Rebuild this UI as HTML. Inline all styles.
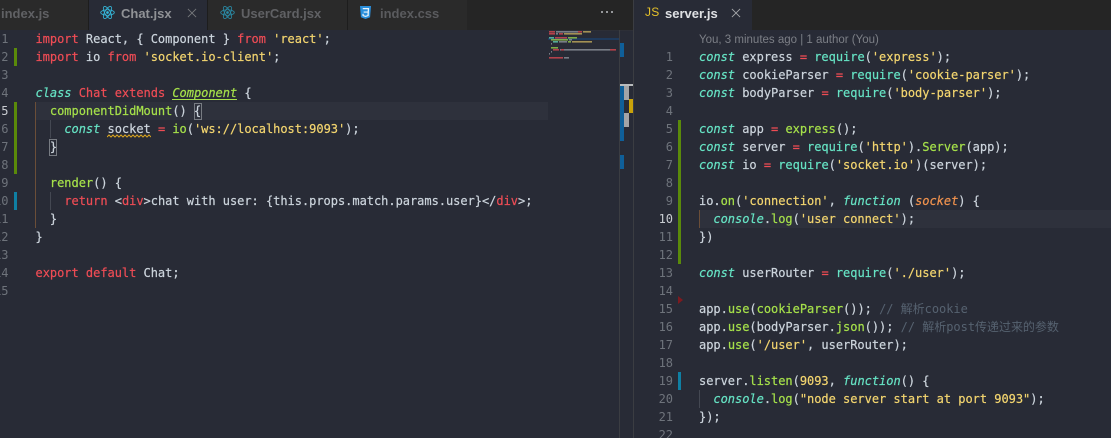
<!DOCTYPE html>
<html><head><meta charset="utf-8">
<style>
html,body{margin:0;padding:0;background:#282b36;}
#a{position:relative;width:1111px;height:438px;overflow:hidden;background:#282b36;font-family:"DejaVu Sans Mono","Noto Sans CJK SC",monospace;font-size:12px;color:#ccd4dc;}
.l{position:absolute;height:18px;line-height:18px;white-space:pre;letter-spacing:-.024px;-webkit-text-stroke:.2px;}
.n{position:absolute;height:18px;line-height:18px;text-align:right;color:#6e737b;width:30px;letter-spacing:-.024px;}
.b{position:absolute;}
.r{color:#ee4c55}.g{color:#a5e04a}.c{color:#66e3c4;font-style:italic}.q{color:#66e3c4}.y{color:#f3d56f}.o{color:#f0924e;font-style:italic}.m{color:#566270;-webkit-text-stroke:0}
.t{position:absolute;top:0;height:30px;line-height:27px;font-family:"Liberation Sans",sans-serif;font-size:13px;font-weight:bold;color:#606164;white-space:pre;}
.mm g rect{height:1.6px}
</style></head><body><div id="a">

<!-- tab bars -->
<div class="b" style="left:0;top:0;width:1111px;height:30px;background:#252525"></div>
<div class="b" style="left:0;top:0;width:88px;height:30px;background:#2a2a2a"></div>
<div class="b" style="left:88px;top:0;width:120px;height:30px;background:#282b36;border-left:1px solid #1d1d1d;border-right:1px solid #1d1d1d;box-sizing:border-box"></div>
<div class="b" style="left:208px;top:0;width:140px;height:30px;background:#2a2a2a;border-right:1px solid #1d1d1d;box-sizing:border-box"></div>
<div class="b" style="left:348px;top:0;width:119px;height:30px;background:#2a2a2a"></div>
<div class="b" style="left:634px;top:0;width:118px;height:30px;background:#282b36"></div>
<div class="b" style="left:633px;top:0;width:1px;height:438px;background:#3b3d42"></div>

<div class="t" style="left:1px">index.js</div>
<svg class="b" style="left:100px;top:5px" width="15" height="15" viewBox="-11 -11 22 22" fill="none" stroke="#35b9dc" stroke-width="1.2"><ellipse rx="10" ry="4"/><ellipse rx="10" ry="4" transform="rotate(60)"/><ellipse rx="10" ry="4" transform="rotate(120)"/><circle r="2" fill="#35b9dc" stroke="none"/></svg>
<div class="t" style="left:121px;color:#909296">Chat.jsx</div>
<svg class="b" style="left:187px;top:8px" width="10" height="10" viewBox="0 0 11 11" stroke="#75777b" stroke-width="1"><path d="M1 1L10 10M10 1L1 10"/></svg>
<svg class="b" style="left:220px;top:5px" width="15" height="15" viewBox="-11 -11 22 22" fill="none" stroke="#2a8ba6" stroke-width="1.2"><ellipse rx="10" ry="4"/><ellipse rx="10" ry="4" transform="rotate(60)"/><ellipse rx="10" ry="4" transform="rotate(120)"/><circle r="2" fill="#2a8ba6" stroke="none"/></svg>
<div class="t" style="left:241px">UserCard.jsx</div>
<svg class="b" style="left:360px;top:6px" width="11" height="13" viewBox="0 0 12 15" preserveAspectRatio="none"><path d="M0 0H12L11 13L6 15L1 13Z" fill="#2a8fdc"/><path d="M3 3H9.2L8.8 11L6 12L3.4 11L3.3 9M4 7H8.8" fill="none" stroke="#e8f3fb" stroke-width="1.4"/></svg>
<div class="t" style="left:380px;color:#5a5b5e">index.css</div>
<div class="b" style="left:601px;top:11px;width:2px;height:2px;background:#96989b;box-shadow:5px 0 #96989b,10px 0 #96989b"></div>
<div class="t" style="left:645px;top:0;color:#e6c229;font-size:12px;font-weight:normal;letter-spacing:.3px;line-height:25px">JS</div>
<div class="t" style="left:665px;color:#dfe1e4">server.js</div>
<svg class="b" style="left:731px;top:8px" width="10" height="10" viewBox="0 0 11 11" stroke="#a4a6a9" stroke-width="1"><path d="M1 1L10 10M10 1L1 10"/></svg>

<!-- active lines -->
<div class="b" style="left:36px;top:102px;width:512px;height:18px;background:#2e313c"></div>
<div class="b" style="left:699px;top:210px;width:412px;height:18px;background:#2e313c"></div>

<!-- git gutters left -->
<div class="b" style="left:14px;top:48px;width:3px;height:18px;background:#5a8a0a"></div>
<div class="b" style="left:14px;top:102px;width:3px;height:72px;background:#5a8a0a"></div>
<div class="b" style="left:14px;top:192px;width:3px;height:18px;background:#0f7fa3"></div>
<!-- guides left -->
<div class="b" style="left:35px;top:102px;width:1px;height:126px;background:#6b4e38"></div>
<div class="b" style="left:50px;top:120px;width:1px;height:18px;background:#444852"></div>
<div class="b" style="left:50px;top:192px;width:1px;height:18px;background:#444852"></div>
<!-- bracket boxes -->
<div class="b" style="left:194px;top:103px;width:6px;height:15px;border:1px solid #777b82"></div>
<div class="b" style="left:49px;top:139px;width:6px;height:15px;border:1px solid #777b82"></div>
<!-- component underline -->
<div class="b" style="left:172px;top:99px;width:65px;height:1px;background:#a5e04a"></div>
<!-- squiggle -->
<svg class="b" style="left:107px;top:134px" width="44" height="4" viewBox="0 0 44 4" fill="none" stroke="#d9a520" stroke-width="1"><path d="M0 3L2 1L4 3L6 1L8 3L10 1L12 3L14 1L16 3L18 1L20 3L22 1L24 3L26 1L28 3L30 1L32 3L34 1L36 3L38 1L40 3L42 1L44 3"/></svg>

<!-- left numbers -->
<div class="n" style="left:-21.5px;top:30px">1</div>
<div class="n" style="left:-21.5px;top:48px">2</div>
<div class="n" style="left:-21.5px;top:66px">3</div>
<div class="n" style="left:-21.5px;top:84px">4</div>
<div class="n" style="left:-21.5px;top:102px;color:#c9ccd1">5</div>
<div class="n" style="left:-21.5px;top:120px">6</div>
<div class="n" style="left:-21.5px;top:138px">7</div>
<div class="n" style="left:-21.5px;top:156px">8</div>
<div class="n" style="left:-21.5px;top:174px">9</div>
<div class="n" style="left:-21.5px;top:192px">10</div>
<div class="n" style="left:-21.5px;top:210px">11</div>
<div class="n" style="left:-21.5px;top:228px">12</div>
<div class="n" style="left:-21.5px;top:246px">13</div>
<div class="n" style="left:-21.5px;top:264px">14</div>
<div class="n" style="left:-21.5px;top:282px">15</div>

<!-- left code -->
<div class="l" style="left:35.5px;top:30px"><span class="r">import</span> React, { Component } <span class="r">from</span> <span class="y">'react'</span>;</div>
<div class="l" style="left:35.5px;top:48px"><span class="r">import</span> io <span class="r">from</span> <span class="y">'socket.io-client'</span>;</div>
<div class="l" style="left:35.5px;top:84px"><span class="c">class</span> <span class="r">Chat</span> <span class="r">extends</span> <span class="g" style="font-style:italic">Component</span> {</div>
<div class="l" style="left:35.5px;top:102px">  <span class="g">componentDidMount</span>() {</div>
<div class="l" style="left:35.5px;top:120px">    <span class="c">const</span> socket <span class="r">=</span> <span class="g">io</span>(<span class="y">'ws://localhost:9093'</span>);</div>
<div class="l" style="left:35.5px;top:138px">  }</div>
<div class="l" style="left:35.5px;top:174px">  <span class="g">render</span>() {</div>
<div class="l" style="left:35.5px;top:192px">    <span class="r">return</span> &lt;<span class="r">div</span>&gt;chat with user: {this.props.match.params.user}&lt;/<span class="r">div</span>&gt;;</div>
<div class="l" style="left:35.5px;top:210px">  }</div>
<div class="l" style="left:35.5px;top:228px">}</div>
<div class="l" style="left:35.5px;top:264px"><span class="r">export</span> <span class="r">default</span> Chat;</div>

<!-- minimap -->
<svg class="b mm" style="left:548px;top:30px" width="71" height="32" viewBox="0 0 71 32">
<rect x="0" y="8" width="71" height="2" fill="#1f3a5c"/>
<g opacity=".7">
<rect x="1" y="1" width="6" height="1" fill="#ee4c55"/><rect x="8" y="1" width="22" height="1" fill="#9aa0a8"/><rect x="30" y="1" width="4" height="1" fill="#ee4c55"/><rect x="35" y="1" width="8" height="1" fill="#d8bd62"/>
<rect x="1" y="3" width="6" height="1" fill="#ee4c55"/><rect x="8" y="3" width="2" height="1" fill="#9aa0a8"/><rect x="11" y="3" width="4" height="1" fill="#ee4c55"/><rect x="16" y="3" width="18" height="1" fill="#d8bd62"/>
<rect x="1" y="7" width="5" height="1" fill="#66e3c4"/><rect x="7" y="7" width="12" height="1" fill="#ee4c55"/><rect x="20" y="7" width="9" height="1" fill="#a5e04a"/>
<rect x="3" y="9" width="17" height="1" fill="#a5e04a"/><rect x="21" y="9" width="3" height="1" fill="#9aa0a8"/>
<rect x="5" y="11" width="5" height="1" fill="#66e3c4"/><rect x="11" y="11" width="8" height="1" fill="#9aa0a8"/><rect x="20" y="11" width="3" height="1" fill="#a5e04a"/><rect x="24" y="11" width="20" height="1" fill="#d8bd62"/>
<rect x="3" y="13" width="1" height="1" fill="#9aa0a8"/>
<rect x="3" y="17" width="7" height="1" fill="#a5e04a"/>
<rect x="5" y="19" width="6" height="1" fill="#ee4c55"/><rect x="12" y="19" width="1" height="1" fill="#9aa0a8"/><rect x="13" y="19" width="3" height="1" fill="#ee4c55"/><rect x="16" y="19" width="46" height="1" fill="#9aa0a8"/><rect x="62" y="19" width="6" height="1" fill="#ee4c55"/>
<rect x="3" y="21" width="1" height="1" fill="#9aa0a8"/>
<rect x="1" y="23" width="1" height="1" fill="#9aa0a8"/>
<rect x="1" y="27" width="14" height="1" fill="#ee4c55"/><rect x="16" y="27" width="5" height="1" fill="#9aa0a8"/>
</g>
</svg>

<!-- overview ruler -->
<div class="b" style="left:548px;top:30px;width:85px;height:1px;background:#2d2f37"></div>
<div class="b" style="left:619px;top:30px;width:1px;height:408px;background:#3b3d42"></div>
<div class="b" style="left:620px;top:43px;width:4px;height:14px;background:#0f5f99"></div>
<div class="b" style="left:620px;top:84px;width:13px;height:2px;background:#b9bbbd"></div>
<div class="b" style="left:620px;top:86px;width:4px;height:55px;background:#0f5f99"></div>
<div class="b" style="left:624px;top:86px;width:5px;height:14px;background:#a3a4a6"></div>
<div class="b" style="left:624px;top:113px;width:5px;height:14px;background:#a3a4a6"></div>
<div class="b" style="left:629px;top:99px;width:4px;height:14px;background:#c9a20a"></div>
<div class="b" style="left:620px;top:155px;width:4px;height:14px;background:#0f5f99"></div>

<!-- right gutters -->
<div class="b" style="left:678px;top:120px;width:3px;height:144px;background:#5a8a0a"></div>
<div class="b" style="left:678px;top:372px;width:3px;height:18px;background:#0f7fa3"></div>
<svg class="b" style="left:678px;top:296px" width="5" height="8" viewBox="0 0 5 8"><path d="M0 0L5 4L0 8Z" fill="#7d1a1f"/></svg>
<div class="b" style="left:699px;top:210px;width:1px;height:18px;background:#6b4e38"></div>
<div class="b" style="left:699px;top:390px;width:1px;height:18px;background:#444852"></div>

<div class="b" style="left:699px;top:32px;height:16px;line-height:16px;font-family:'Liberation Sans',sans-serif;font-size:11.5px;color:#7c7f86;white-space:pre">You, 3 minutes ago | 1 author (You)</div>

<!-- right numbers -->
<div class="n" style="left:643px;top:48px">1</div>
<div class="n" style="left:643px;top:66px">2</div>
<div class="n" style="left:643px;top:84px">3</div>
<div class="n" style="left:643px;top:102px">4</div>
<div class="n" style="left:643px;top:120px">5</div>
<div class="n" style="left:643px;top:138px">6</div>
<div class="n" style="left:643px;top:156px">7</div>
<div class="n" style="left:643px;top:174px">8</div>
<div class="n" style="left:643px;top:192px">9</div>
<div class="n" style="left:643px;top:210px;color:#c9ccd1">10</div>
<div class="n" style="left:643px;top:228px">11</div>
<div class="n" style="left:643px;top:246px">12</div>
<div class="n" style="left:643px;top:264px">13</div>
<div class="n" style="left:643px;top:282px">14</div>
<div class="n" style="left:643px;top:300px">15</div>
<div class="n" style="left:643px;top:318px">16</div>
<div class="n" style="left:643px;top:336px">17</div>
<div class="n" style="left:643px;top:354px">18</div>
<div class="n" style="left:643px;top:372px">19</div>
<div class="n" style="left:643px;top:390px">20</div>
<div class="n" style="left:643px;top:408px">21</div>
<div class="n" style="left:643px;top:426px">22</div>

<!-- right code -->
<div class="l" style="left:699px;top:48px"><span class="c">const</span> express <span class="r">=</span> <span class="q">require</span>(<span class="y">'express'</span>);</div>
<div class="l" style="left:699px;top:66px"><span class="c">const</span> cookieParser <span class="r">=</span> <span class="q">require</span>(<span class="y">'cookie-parser'</span>);</div>
<div class="l" style="left:699px;top:84px"><span class="c">const</span> bodyParser <span class="r">=</span> <span class="q">require</span>(<span class="y">'body-parser'</span>);</div>
<div class="l" style="left:699px;top:120px"><span class="c">const</span> app <span class="r">=</span> <span class="g">express</span>();</div>
<div class="l" style="left:699px;top:138px"><span class="c">const</span> server <span class="r">=</span> <span class="q">require</span>(<span class="y">'http'</span>).<span class="g">Server</span>(app);</div>
<div class="l" style="left:699px;top:156px"><span class="c">const</span> io <span class="r">=</span> <span class="q">require</span>(<span class="y">'socket.io'</span>)(server);</div>
<div class="l" style="left:699px;top:192px">io.<span class="g">on</span>(<span class="y">'connection'</span>, <span class="c">function</span> (<span class="o">socket</span>) {</div>
<div class="l" style="left:699px;top:210px">  <span class="c">console</span>.<span class="g">log</span>(<span class="y">'user connect'</span>);</div>
<div class="l" style="left:699px;top:228px">})</div>
<div class="l" style="left:699px;top:264px"><span class="c">const</span> userRouter <span class="r">=</span> <span class="q">require</span>(<span class="y">'./user'</span>);</div>
<div class="l" style="left:699px;top:300px">app.<span class="g">use</span>(<span class="g">cookieParser</span>()); <span class="m">// 解析cookie</span></div>
<div class="l" style="left:699px;top:318px">app.<span class="g">use</span>(bodyParser.<span class="g">json</span>()); <span class="m">// 解析post传递过来的参数</span></div>
<div class="l" style="left:699px;top:336px">app.<span class="g">use</span>(<span class="y">'/user'</span>, userRouter);</div>
<div class="l" style="left:699px;top:372px">server.<span class="g">listen</span>(<span class="y">9093</span>, <span class="c">function</span>() {</div>
<div class="l" style="left:699px;top:390px">  <span class="c">console</span>.<span class="g">log</span>(<span class="y">"node server start at port 9093"</span>);</div>
<div class="l" style="left:699px;top:408px">});</div>

</div></body></html>
